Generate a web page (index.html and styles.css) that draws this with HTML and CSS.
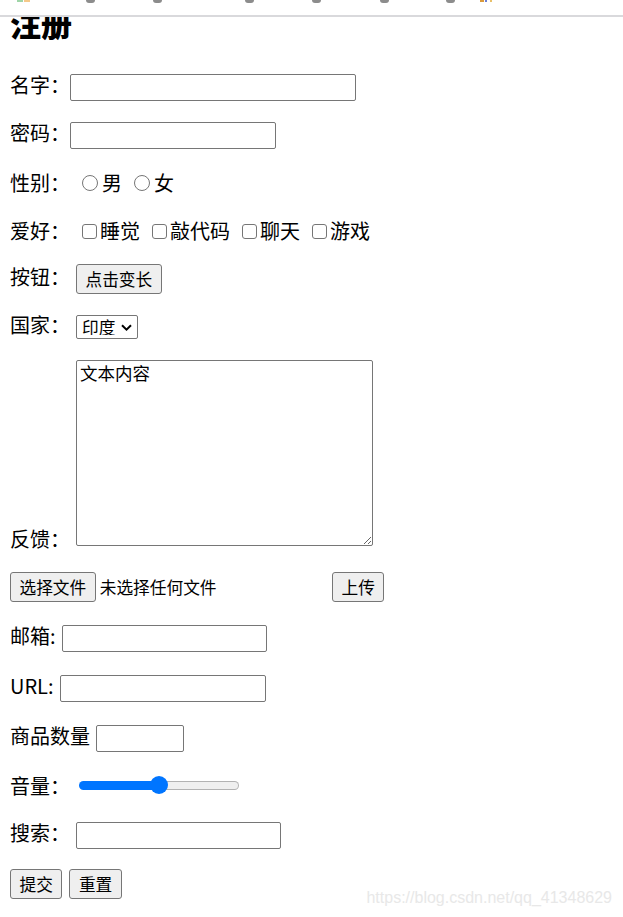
FILE: index.html
```html
<!DOCTYPE html>
<html lang="zh-CN">
<head>
<meta charset="utf-8">
<title>注册</title>
<link rel="stylesheet" href="styles.css">
</head>
<body>
<div class="page">
  <div class="topbar">
    <span class="tb-ico tb-ico-a"></span>
    <span class="tb-dot"></span>
    <span class="tb-dot"></span>
    <span class="tb-dot"></span>
    <span class="tb-dot"></span>
    <span class="tb-dot"></span>
    <span class="tb-dot"></span>
    <span class="tb-ico tb-ico-b"></span>
  </div>
  <div class="divider"></div>
  <div class="head"><h1 class="title">注册</h1></div>

  <form class="form">
    <div class="row">
      <span class="lbl">名字：</span>
      <input class="txt w-286" type="text">
    </div>
    <div class="row">
      <span class="lbl">密码：</span>
      <input class="txt w-206" type="password">
    </div>
    <div class="row">
      <span class="lbl lbl-mid">性别：</span>
      <input class="radio" type="radio" name="sex"><span class="opt">男</span>
      <input class="radio" type="radio" name="sex"><span class="opt">女</span>
    </div>
    <div class="row">
      <span class="lbl lbl-mid">爱好：</span>
      <input class="check" type="checkbox"><span class="opt">睡觉</span>
      <input class="check" type="checkbox"><span class="opt">敲代码</span>
      <input class="check" type="checkbox"><span class="opt">聊天</span>
      <input class="check" type="checkbox"><span class="opt">游戏</span>
    </div>
    <div class="row">
      <span class="lbl">按钮：</span>
      <button class="btn ml-6" type="button">点击变长</button>
    </div>
    <div class="row">
      <span class="lbl">国家：</span>
      <span class="sel-wrap ml-6">
        <select class="sel">
          <option>印度</option>
        </select>
        <svg class="sel-arrow" width="11" height="7" viewBox="0 0 11 7" aria-hidden="true">
          <path d="M1 1.2 L5.5 5.6 L10 1.2" fill="none" stroke="#000" stroke-width="2"/>
        </svg>
      </span>
    </div>
    <div class="row row-area">
      <span class="lbl lbl-area">反馈：</span>
      <textarea class="area ml-6">文本内容</textarea>
    </div>
    <div class="row mt-26">
      <div class="file">
        <button class="btn" type="button">选择文件</button>
        <span class="file-name">未选择任何文件</span>
      </div>
      <button class="btn" type="button">上传</button>
    </div>
    <div class="row mt-21">
      <span class="lbl">邮箱:</span>
      <input class="txt w-205 ml-6" type="email">
    </div>
    <div class="row mt-20">
      <span class="lbl">URL:</span>
      <input class="txt w-206 ml-6" type="url">
    </div>
    <div class="row mt-20">
      <span class="lbl">商品数量</span>
      <input class="txt w-88 ml-6" type="number">
    </div>
    <div class="row mt-17">
      <span class="lbl lbl-low">音量：</span>
      <input class="range" type="range" min="0" max="100" value="50">
    </div>
    <div class="row mt-20">
      <span class="lbl">搜索：</span>
      <input class="txt w-205 ml-6" type="search">
    </div>
    <div class="row mt-19">
      <button class="btn" type="submit">提交</button>
      <button class="btn ml-7" type="reset">重置</button>
    </div>
  </form>

  <div class="watermark">https://blog.csdn.net/qq_41348629</div>
</div>
</body>
</html>
```

FILE: styles.css
```css
html, body {
  margin: 0;
  padding: 0;
  background: #ffffff;
}

body {
  font-family: "Noto Sans CJK SC", "Microsoft YaHei", sans-serif;
  font-size: 20px;
  color: #000000;
}

.page {
  position: relative;
  width: 623px;
  height: 917px;
  overflow: hidden;
}

/* cut-off browser toolbar */
.topbar {
  display: flex;
  align-items: flex-start;
  height: 15px;
}

.tb-dot {
  width: 9px;
  height: 3px;
  background: #8c8c8c;
  border-radius: 0 0 5px 5px;
}

.tb-ico {
  height: 2px;
}

.tb-ico-a {
  width: 13px;
  margin-left: 17px;
  background: linear-gradient(to right, #9fd5a8 0 45%, #ffffff 45% 55%, #f5c98a 55% 100%);
}

.tb-ico-b {
  width: 12px;
  margin-left: 25px;
  background: linear-gradient(to right, #d99a3c 0 30%, #ffffff 30% 45%, #6b7fd6 45% 60%, #ffffff 60% 80%, #e8c06a 80% 100%);
}

.topbar .tb-dot:nth-child(2) { margin-left: 56px; }
.topbar .tb-dot:nth-child(3) { margin-left: 58px; }
.topbar .tb-dot:nth-child(4) { margin-left: 83px; }
.topbar .tb-dot:nth-child(5) { margin-left: 58px; }
.topbar .tb-dot:nth-child(6) { margin-left: 59px; }
.topbar .tb-dot:nth-child(7) { margin-left: 57px; }

.divider {
  height: 2px;
  background: #d9d9dc;
}

.head {
  height: 37px;
  overflow: hidden;
  padding-left: 10px;
}

.title {
  margin: -10px 0 0 0;
  font-size: 31px;
  line-height: 31px;
  font-weight: 900;
}

/* form rows */
.form {
  margin: 0;
  padding: 0 10px;
}

.row {
  display: flex;
  align-items: center;
  height: 30px;
  margin-top: 18px;
}

.mt-17 { margin-top: 17px; }
.mt-19 { margin-top: 19px; }
.mt-20 { margin-top: 20px; }
.mt-21 { margin-top: 21px; }
.mt-26 { margin-top: 26px; }

.ml-6 { margin-left: 6px; }
.ml-7 { margin-left: 7px; }

.lbl {
  line-height: 30px;
  margin-bottom: 4px;
  white-space: nowrap;
}

.lbl-mid {
  margin-bottom: 1px;
}

.lbl-low {
  margin-bottom: -2px;
}

.opt {
  line-height: 30px;
  margin-bottom: 1px;
  white-space: nowrap;
}

.txt {
  box-sizing: border-box;
  height: 27px;
  border: 1px solid #767676;
  border-radius: 2px;
  padding: 1px 3px;
  background: #ffffff;
  font-family: inherit;
  font-size: 16.7px;
  outline: none;
}

.w-286 { width: 286px; }
.w-206 { width: 206px; }
.w-205 { width: 205px; }
.w-88 { width: 88px; }

.radio {
  -webkit-appearance: none;
  appearance: none;
  box-sizing: border-box;
  width: 16px;
  height: 16px;
  margin: 0 4px 0 12px;
  border: 1px solid #767676;
  border-radius: 50%;
  background: #ffffff;
}

.check {
  -webkit-appearance: none;
  appearance: none;
  box-sizing: border-box;
  width: 15px;
  height: 15px;
  margin: 0 3px 0 12px;
  border: 1px solid #767676;
  border-radius: 3px;
  background: #ffffff;
}

.btn {
  box-sizing: border-box;
  height: 30px;
  padding: 0 8.5px;
  border: 1px solid #767676;
  border-radius: 3px;
  background: #efefef;
  color: #000000;
  font-family: inherit;
  font-size: 16.7px;
  line-height: 1;
}

.sel-wrap {
  position: relative;
  display: inline-flex;
}

.sel {
  -webkit-appearance: none;
  appearance: none;
  box-sizing: border-box;
  width: 62px;
  height: 24px;
  border: 1px solid #767676;
  border-radius: 2px;
  background: #ffffff;
  color: #000000;
  font-family: inherit;
  font-size: 16.7px;
  line-height: 1;
  padding: 0 0 0 5px;
}

.sel-arrow {
  position: absolute;
  right: 6px;
  top: 9px;
  pointer-events: none;
}

.row-area {
  height: auto;
  align-items: flex-end;
}

.lbl-area {
  margin-bottom: -8px;
}

.area {
  box-sizing: border-box;
  width: 297px;
  height: 186px;
  margin-top: 0;
  margin-bottom: 0;
  border: 1px solid #767676;
  border-radius: 2px;
  padding: 1px 3px;
  font-family: "Noto Sans CJK SC", sans-serif;
  font-size: 17.5px;
  line-height: 1.2;
  color: #000000;
  background: #ffffff;
  outline: none;
}

.file {
  display: flex;
  align-items: center;
  width: 322px;
}

.file-name {
  margin-left: 4px;
  font-size: 16.7px;
  white-space: nowrap;
}

.range {
  -webkit-appearance: none;
  appearance: none;
  box-sizing: border-box;
  width: 160px;
  height: 9px;
  margin: 0 0 0 9px;
  border: 1px solid transparent;
  border-radius: 5px;
  background:
    linear-gradient(to right, #0075ff 0 50%, transparent 50% 100%) border-box,
    linear-gradient(#efefef, #efefef) padding-box,
    linear-gradient(to right, #0075ff 0 50%, #b2b2b2 50% 100%) border-box;
  outline: none;
}

.range::-webkit-slider-thumb {
  -webkit-appearance: none;
  appearance: none;
  width: 18px;
  height: 18px;
  border-radius: 50%;
  background: #0075ff;
  border: none;
}

.watermark {
  position: absolute;
  right: 11px;
  top: 889px;
  font-family: "Liberation Sans", Arial, sans-serif;
  font-size: 16px;
  color: #e8e8e8;
  white-space: nowrap;
}
```
